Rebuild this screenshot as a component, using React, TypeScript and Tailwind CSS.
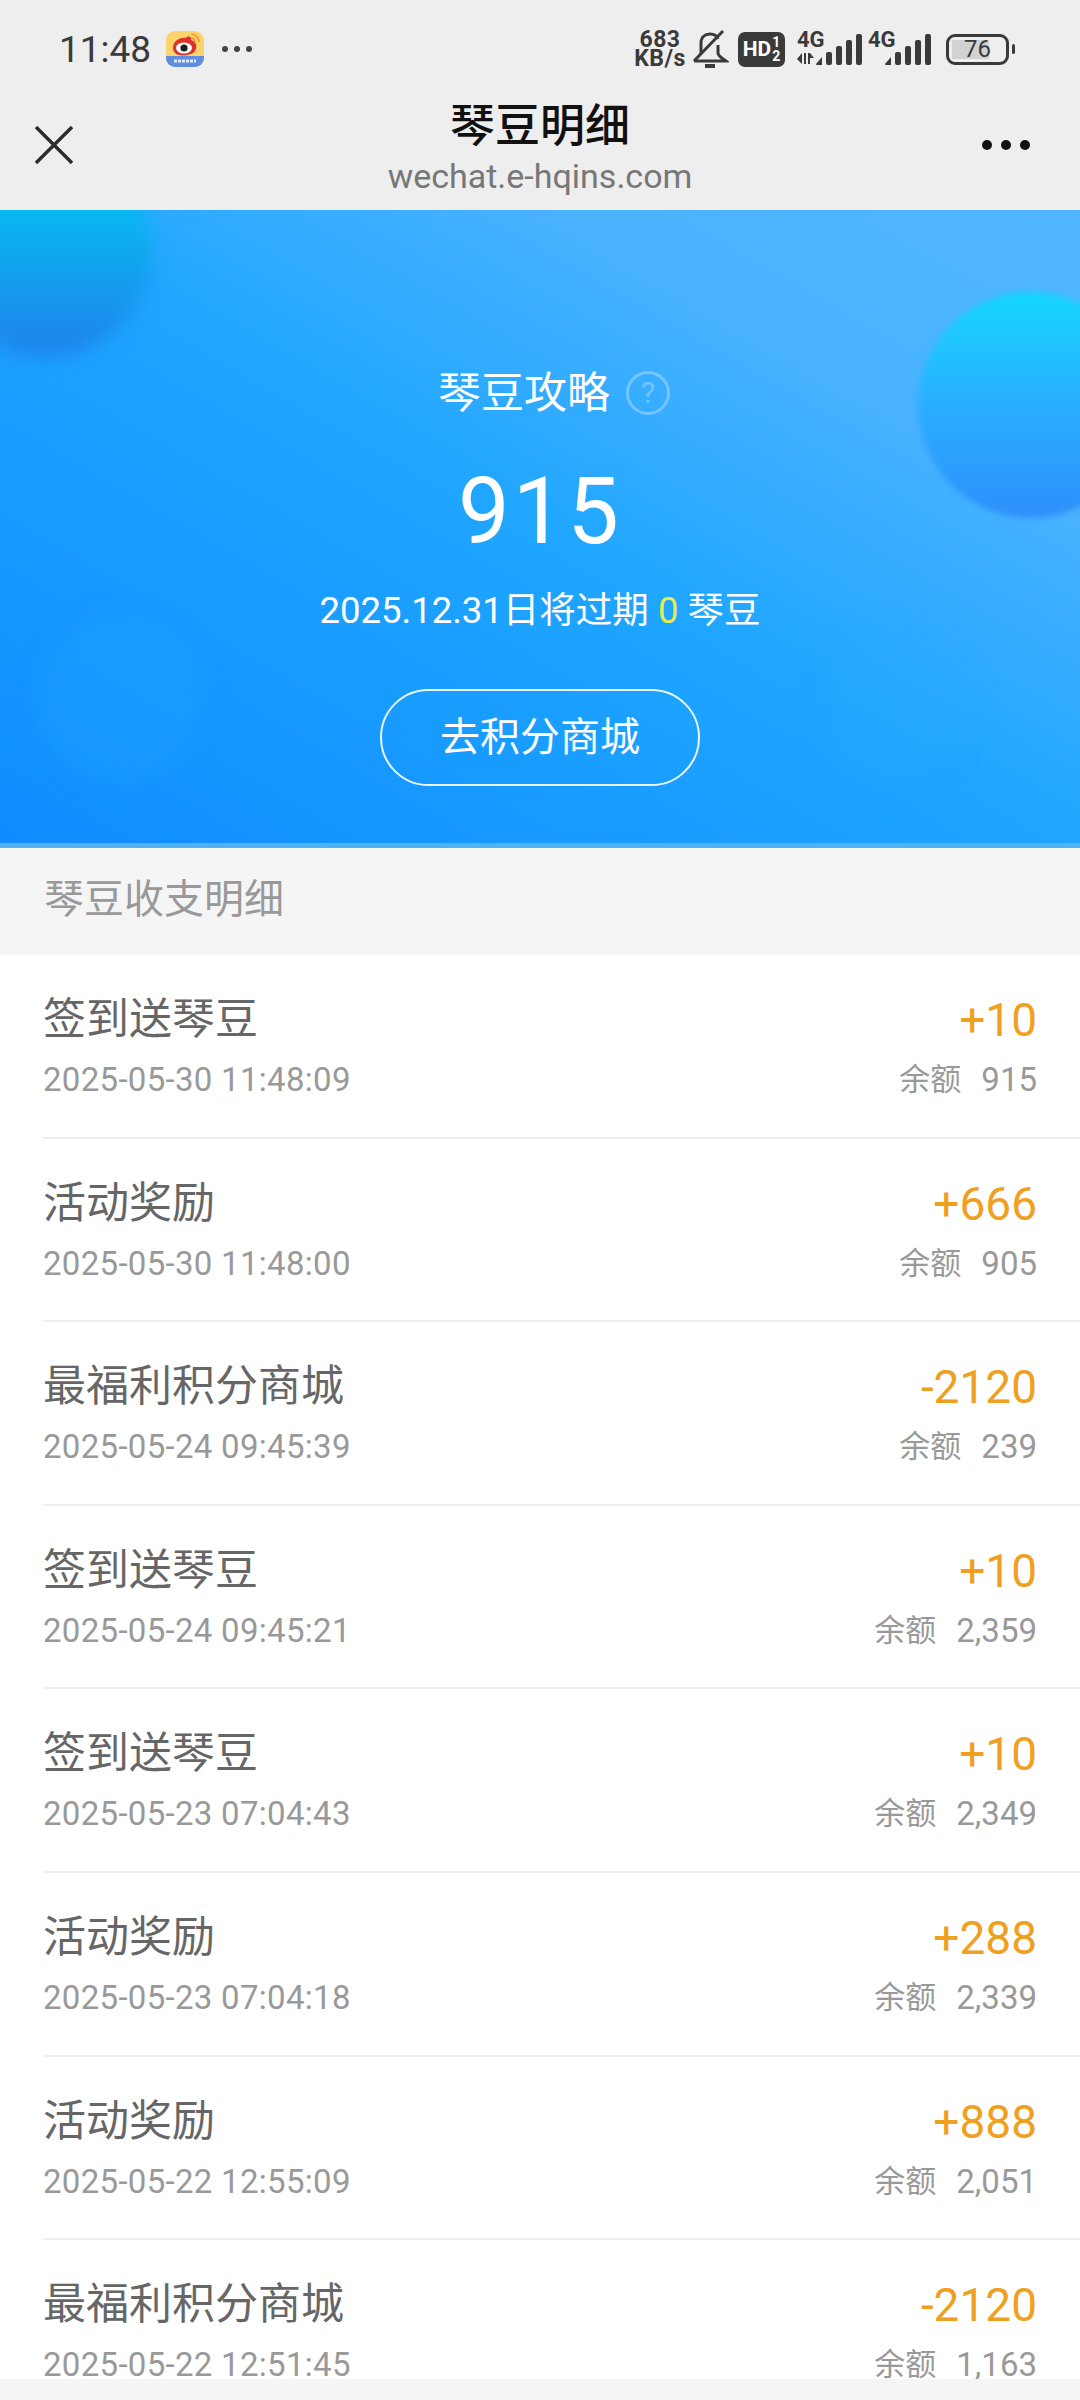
import React from "react";

const rows = [
  { title: "签到送琴豆", time: "2025-05-30 11:48:09", amount: "+10", balance: "915" },
  { title: "活动奖励", time: "2025-05-30 11:48:00", amount: "+666", balance: "905" },
  { title: "最福利积分商城", time: "2025-05-24 09:45:39", amount: "-2120", balance: "239" },
  { title: "签到送琴豆", time: "2025-05-24 09:45:21", amount: "+10", balance: "2,359" },
  { title: "签到送琴豆", time: "2025-05-23 07:04:43", amount: "+10", balance: "2,349" },
  { title: "活动奖励", time: "2025-05-23 07:04:18", amount: "+288", balance: "2,339" },
  { title: "活动奖励", time: "2025-05-22 12:55:09", amount: "+888", balance: "2,051" },
  { title: "最福利积分商城", time: "2025-05-22 12:51:45", amount: "-2120", balance: "1,163" },
];

const SignalBars = () => (
  <svg width="48" height="34" viewBox="0 0 48 34" fill="#3a3a3a">
    <path d="M1 31 L7 24 V32 H2 a1 1 0 0 1 -1 -1z" />
    <rect x="11" y="19" width="6" height="13" rx="2" />
    <rect x="21" y="13" width="6" height="19" rx="2" />
    <rect x="31" y="7" width="6" height="25" rx="2" />
    <rect x="41" y="1" width="6" height="31" rx="2" />
  </svg>
);

const WeiboIcon = () => (
  <svg width="38" height="36" viewBox="0 0 38 36">
    <defs>
      <clipPath id="wb">
        <rect width="38" height="36" rx="9" />
      </clipPath>
    </defs>
    <g clipPath="url(#wb)">
      <rect width="38" height="36" fill="#fbd46e" />
      <rect y="25" width="38" height="11" fill="#5f8ee0" />
      <path d="M8 30 h22" stroke="#dfe8fa" strokeWidth="3" strokeDasharray="3 1" />
      <path d="M7 17 C7 10 14 6 20 7 C22 4 26 6 25 9 C30 11 32 15 29 20 C26 25 12 26 9 22 C8 21 7 19 7 17z" fill="#e0322c" />
      <ellipse cx="18" cy="17" rx="8" ry="5.5" fill="#fff" />
      <circle cx="18" cy="17" r="3.6" fill="#1d1d1d" />
      <path d="M25 3 a8 8 0 0 1 8 8 M25 7 a4 4 0 0 1 4 4" stroke="#ee9a2c" strokeWidth="1.6" fill="none" />
    </g>
  </svg>
);

const StatusBar = () => (
  <div className="h-[98px] flex items-center justify-between pl-[59px] pr-[65px] text-[#3a3a3a]">
    <div className="flex items-center">
      <span className="text-[37px] leading-none w-[107px]">11:48</span>
      <WeiboIcon />
      <div className="flex gap-[6px] ml-[18px]">
        <div className="w-[6px] h-[6px] rounded-full bg-[#444]" />
        <div className="w-[6px] h-[6px] rounded-full bg-[#444]" />
        <div className="w-[6px] h-[6px] rounded-full bg-[#444]" />
      </div>
    </div>
    <div className="flex items-center">
      <div className="flex flex-col items-center w-[50px] text-[23px] leading-[19px] tracking-[0.5px] font-bold">
        <span>683</span>
        <span>KB/s</span>
      </div>
      <svg className="ml-[6px]" width="38" height="40" viewBox="0 0 38 40" fill="none" stroke="#3a3a3a" strokeWidth="3">
        <path d="M10 25 V14 C10 8 14 5 19 5 C23 5 26 7 27 10 M27 16 V24 C27 27 31 29 35 32 H3" />
        <path d="M32 2 L3 32" />
        <path d="M14 37 H24" strokeWidth="4" />
      </svg>
      <div className="ml-[9px] w-[47px] h-[35px] rounded-[7px] bg-[#3a3a3a] text-white flex items-center justify-center font-bold">
        <span className="text-[21px] leading-none">HD</span>
        <div className="flex flex-col items-center text-[14px] leading-[14px] ml-[1px]">
          <span>1</span>
          <span>2</span>
        </div>
      </div>
      <div className="relative ml-[12px] w-[66px] h-[36px]">
        <span className="absolute left-0 top-[-2px] text-[22px] leading-[22px] font-bold">4G</span>
        <svg className="absolute left-0 bottom-[1px]" width="18" height="15" viewBox="0 0 18 15" fill="#3a3a3a">
          <path d="M5 2 V13 L0 8z M7 2 H9 V13 H7z M11 2 H13 V13 H11z M13 2 L17 7 H13z" />
        </svg>
        <div className="absolute right-0 bottom-0">
          <SignalBars />
        </div>
      </div>
      <div className="relative ml-[5px] w-[64px] h-[36px]">
        <span className="absolute left-0 top-[-2px] text-[22px] leading-[22px] font-bold">4G</span>
        <div className="absolute right-0 bottom-0">
          <SignalBars />
        </div>
      </div>
      <div className="ml-[14px] w-[63px] h-[31px] rounded-[9px] border-[3px] border-[#3a3a3a] p-[3px] flex relative">
        <div className="w-[37px] h-full bg-[#d2d2d2]" />
        <span className="absolute inset-0 flex items-center justify-center text-[24px] leading-none font-normal">76</span>
      </div>
      <div className="ml-[3px] w-[3px] h-[10px] rounded-sm bg-[#3a3a3a]" />
    </div>
  </div>
);

const NavBar = () => (
  <div className="h-[112px] grid grid-cols-[1fr_auto_1fr]">
    <div className="h-[94px] pl-[35px] flex items-center">
      <svg width="38" height="38" viewBox="0 0 38 38" stroke="#2b2b2b" strokeWidth="3.4">
        <path d="M1 1 L37 37 M37 1 L1 37" />
      </svg>
    </div>
    <div className="flex flex-col items-center pt-[3px]">
      <span className="text-[45px] leading-[52px] font-medium text-[#111]">琴豆明细</span>
      <span className="mt-[2px] text-[34px] leading-[42px] text-[#777]">wechat.e-hqins.com</span>
    </div>
    <div className="h-[94px] pr-[50px] flex items-center justify-end gap-[9px]">
      <div className="w-[10px] h-[10px] rounded-full bg-[#111]" />
      <div className="w-[10px] h-[10px] rounded-full bg-[#111]" />
      <div className="w-[10px] h-[10px] rounded-full bg-[#111]" />
    </div>
  </div>
);

const Hero = () => (
  <div className="relative h-[638px] overflow-hidden border-b-[5px] border-[#4fb2f6] bg-[linear-gradient(30deg,#0f8cff_0%,#1fa6ff_50%,#48b2ff_75%,#52b6ff_100%)]">
    {/* soft balls behind the content */}
    <div className="absolute left-[-60px] top-[-65px] w-[212px] h-[212px] rounded-full bg-gradient-to-b from-[#00d0f5] via-[#0fa8ee] to-[#1f80ea] blur-[10px]" />
    <div className="absolute left-[918px] top-[82px] w-[226px] h-[226px] rounded-full bg-gradient-to-b from-[#13d6ff] via-[#2aaeff] to-[#2e8ffb] blur-[3px]" />
    <div className="absolute left-[35px] top-[405px] w-[170px] h-[170px] rounded-full bg-[#1ea0ff]/40 blur-[10px]" />
    <div className="absolute left-[820px] top-[420px] w-[150px] h-[150px] rounded-full bg-[#2aa8ff]/30 blur-[12px]" />
    <div className="relative flex flex-col items-center pt-[159px] text-white">
      <div className="h-[48px] ml-[28px] flex items-center">
        <span className="text-[43px] leading-[48px]">琴豆攻略</span>
        <div className="ml-[16px] w-[44px] h-[44px] rounded-full border-[3px] border-white/30 flex items-center justify-center text-[30px] leading-none text-white/30">
          ?
        </div>
      </div>
      <div className="mt-[45px] text-[92px] leading-[100px] tracking-[3px]">915</div>
      <div className="mt-[27px] text-[36.5px] leading-[44px]">
        2025.12.31日将过期 <span className="text-[#e6ea55]">0</span> 琴豆
      </div>
      <div className="mt-[56px] w-[320px] h-[97px] rounded-full border-2 border-white/90 flex items-center justify-center text-[40px]">
        去积分商城
      </div>
    </div>
  </div>
);

const Row = ({ title, time, amount, balance }: (typeof rows)[number]) => (
  <div className="ml-[43px] h-[183.6px] pr-[43px] pt-[36px] border-b-2 border-[#eeeeee] flex justify-between">
    <div className="flex flex-col">
      <span className="text-[43px] leading-[56px] text-[#666]">{title}</span>
      <span className="mt-[13px] text-[33px] leading-[40px] tracking-[0.3px] text-[#999]">{time}</span>
    </div>
    <div className="flex flex-col items-end">
      <span className="text-[46px] leading-[58px] text-[#f0a020]">{amount}</span>
      <div className="mt-[11px] h-[40px] flex items-center text-[#999]">
        <span className="text-[31px] leading-[40px]">余额</span>
        <span className="ml-[20px] text-[33px] leading-[40px]">{balance}</span>
      </div>
    </div>
  </div>
);

export default function App() {
  return (
    <div className="w-[1080px] h-[2400px] overflow-hidden flex flex-col bg-[#f5f5f5] font-[Roboto,'Noto_Sans_CJK_SC',sans-serif]">
      <div className="bg-[#eeeeee]">
        <StatusBar />
        <NavBar />
      </div>
      <Hero />
      <div className="h-[107px] pb-[3px] flex items-center pl-[44px] text-[40px] text-[#999]">琴豆收支明细</div>
      <div className="flex-1 overflow-hidden bg-white">
        {rows.map((r) => (
          <Row key={r.time} {...r} />
        ))}
      </div>
      <div className="h-[21px]" />
    </div>
  );
}
